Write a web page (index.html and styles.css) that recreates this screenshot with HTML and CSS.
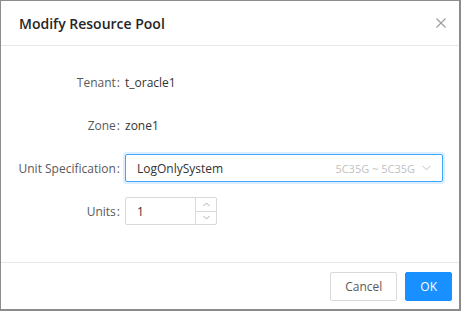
FILE: index.html
```html
<!DOCTYPE html>
<html lang="en">
<head>
    <meta charset="UTF-8">
    <meta name="viewport" content="width=device-width, initial-scale=1.0">
    <title>Modify Resource Pool</title>
    <link rel="stylesheet" href="styles.css">
</head>
<body>
    <div class="modal">
        <div class="modal-header">
            <div class="modal-title">Modify Resource Pool</div>
            <span class="modal-close">
                <svg width="10" height="10" viewBox="0 0 10 10">
                    <path d="M0.5 0.5 L9.5 9.5 M9.5 0.5 L0.5 9.5" stroke="#9a9a9a" stroke-width="1.1" fill="none"/>
                </svg>
            </span>
        </div>
        <div class="modal-body">
            <div class="form-row">
                <label class="form-label">Tenant</label>
                <div class="form-value">t_oracle1</div>
            </div>
            <div class="form-row">
                <label class="form-label">Zone</label>
                <div class="form-value">zone1</div>
            </div>
            <div class="form-row">
                <label class="form-label">Unit Specification</label>
                <div class="select focused">
                    <span class="select-value">LogOnlySystem</span>
                    <span class="select-extra">5C35G ~ 5C35G</span>
                    <svg class="select-arrow" width="9" height="6" viewBox="0 0 9 6">
                        <path d="M0.5 0.8 L4.5 4.8 L8.5 0.8" stroke="#bfbfbf" stroke-width="1" fill="none"/>
                    </svg>
                </div>
            </div>
            <div class="form-row">
                <label class="form-label">Units</label>
                <div class="number-input">
                    <span class="number-value">1</span>
                    <div class="number-handlers">
                        <span class="handler">
                            <svg width="7" height="5" viewBox="0 0 7 5"><path d="M0.5 4 L3.5 1 L6.5 4" stroke="#b0b0b0" fill="none"/></svg>
                        </span>
                        <span class="handler handler-down">
                            <svg width="7" height="5" viewBox="0 0 7 5"><path d="M0.5 1 L3.5 4 L6.5 1" stroke="#b0b0b0" fill="none"/></svg>
                        </span>
                    </div>
                </div>
            </div>
        </div>
        <div class="modal-footer">
            <button class="btn">Cancel</button>
            <button class="btn btn-primary">OK</button>
        </div>
    </div>
</body>
</html>
```

FILE: styles.css
```css
body {
    margin: 0;
    padding: 0;
    font-family: "Open Sans", "Noto Sans", sans-serif;
    font-size: 12px;
    color: #595959;
    background-color: #fff;
}

.modal {
    width: 461px;
    height: 311px;
    box-sizing: border-box;
    border-top: 1px solid #8c8c8c;
    border-left: 1px solid #8c8c8c;
    border-right: 2px solid #8c8c8c;
    border-bottom: 2px solid #8c8c8c;
    display: flex;
    flex-direction: column;
    background-color: #fff;
}

.modal-header {
    height: 44px;
    padding: 0 13px 0 18px;
    display: flex;
    align-items: center;
    justify-content: space-between;
    border-bottom: 1px solid #e8e8e8;
}

.modal-title {
    font-size: 14px;
    font-weight: 600;
    color: #262626;
}

.modal-close {
    display: flex;
    width: 10px;
    height: 10px;
}

.modal-body {
    flex: 1;
    padding-top: 22px;
}

.form-row {
    display: flex;
    align-items: center;
    height: 28px;
    margin-bottom: 15px;
}

.form-label {
    flex: 0 0 124px;
    text-align: right;
    white-space: nowrap;
    color: #595959;
}

.form-label::after {
    content: ":";
    margin: 0 5px 0 1px;
}

.form-value {
    color: #333;
}

.select {
    width: 318px;
    height: 28px;
    box-sizing: border-box;
    border: 1px solid #40a9ff;
    border-radius: 2px;
    box-shadow: 0 0 0 2px rgba(24, 144, 255, 0.15);
    display: flex;
    align-items: center;
    padding: 0 11px;
}

.select-value {
    flex: 1;
    color: #333;
}

.select-extra {
    color: #bfbfbf;
    font-size: 11px;
    margin-right: 7px;
}

.number-input {
    width: 92px;
    height: 28px;
    box-sizing: border-box;
    border: 1px solid #d9d9d9;
    border-radius: 2px;
    display: flex;
}

.number-value {
    flex: 1;
    padding-left: 11px;
    display: flex;
    align-items: center;
    color: #333;
}

.number-handlers {
    width: 20px;
    border-left: 1px solid #d9d9d9;
    display: flex;
    flex-direction: column;
}

.handler {
    flex: 1;
    display: flex;
    align-items: center;
    justify-content: center;
}

.handler-down {
    border-top: 1px solid #d9d9d9;
}

.modal-footer {
    border-top: 1px solid #e8e8e8;
    padding: 9px 7px 0 0;
    height: 37px;
    display: flex;
    justify-content: flex-end;
    gap: 8px;
}

.btn {
    height: 29px;
    padding: 0 14px;
    font-family: "Open Sans", "Noto Sans", sans-serif;
    font-size: 12px;
    color: #595959;
    background-color: #fff;
    border: 1px solid #d9d9d9;
    border-radius: 2px;
}

.btn-primary {
    color: #fff;
    background-color: #1890ff;
    border-color: #1890ff;
}
```
